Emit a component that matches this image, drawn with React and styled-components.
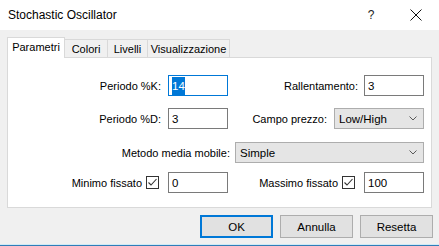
import styled, { createGlobalStyle } from "styled-components"

const GlobalStyle = createGlobalStyle`
    html, body {
        margin: 0;
        padding: 0;
        background: #ffffff;
    }
    body {
        font-family: "Liberation Sans", Arial, sans-serif;
        font-size: 11px;
        color: #000;
    }
`

const Chevron = () => (
    <svg width="8" height="5" viewBox="0 0 8 5">
        <polyline points="0.5,0.5 4,4 7.5,0.5" fill="none" stroke="#5a5a5a" strokeWidth="1" />
    </svg>
)

const Check = () => (
    <svg width="11" height="11" viewBox="0 0 11 11">
        <polyline points="1.5,5.5 4,8 9.5,2" fill="none" stroke="#333" strokeWidth="1.1" />
    </svg>
)

const App = () => {
    return (
        <>
            <GlobalStyle />
            <StWindow>
                <StTitleBar>
                    <StTitle>Stochastic Oscillator</StTitle>
                    <StHelp>?</StHelp>
                    <StClose>
                        <svg width="12" height="12" viewBox="0 0 12 12">
                            <path d="M0.5 0.5 L11.5 11.5 M11.5 0.5 L0.5 11.5" stroke="#111" strokeWidth="1" />
                        </svg>
                    </StClose>
                </StTitleBar>
                <StBody>
                    <StTabStrip>
                        <StTab $active $w={58}>Parametri</StTab>
                        <StTab $w={43}>Colori</StTab>
                        <StTab $w={41}>Livelli</StTab>
                        <StTab $w={83}>Visualizzazione</StTab>
                    </StTabStrip>
                    <StPanel>
                        <StRow $mt={0}>
                            <StField $gap={7}>
                                <StLabel>Periodo %K:</StLabel>
                                <StInput $w={60} $focused>
                                    <StSelected>14</StSelected>
                                </StInput>
                            </StField>
                            <StField $gap={6}>
                                <StLabel>Rallentamento:</StLabel>
                                <StInput $w={60}>3</StInput>
                            </StField>
                        </StRow>
                        <StRow $mt={12}>
                            <StField $gap={7}>
                                <StLabel>Periodo %D:</StLabel>
                                <StInput $w={60}>3</StInput>
                            </StField>
                            <StField $gap={7}>
                                <StLabel>Campo prezzo:</StLabel>
                                <StSelect $w={90}>
                                    <span>Low/High</span>
                                    <Chevron />
                                </StSelect>
                            </StField>
                        </StRow>
                        <StRow $mt={13}>
                            <StField $gap={5} $span>
                                <StLabel>Metodo media mobile:</StLabel>
                                <StSelect $w={189}>
                                    <span>Simple</span>
                                    <Chevron />
                                </StSelect>
                            </StField>
                        </StRow>
                        <StRow $mt={9}>
                            <StField $gap={4}>
                                <StLabel>Minimo fissato</StLabel>
                                <StCheckbox><Check /></StCheckbox>
                                <StInput $w={60} $ml={5}>0</StInput>
                            </StField>
                            <StField $gap={4}>
                                <StLabel>Massimo fissato</StLabel>
                                <StCheckbox><Check /></StCheckbox>
                                <StInput $w={60} $ml={5}>100</StInput>
                            </StField>
                        </StRow>
                    </StPanel>
                    <StButtonRow>
                        <StButton $default>OK</StButton>
                        <StButton>Annulla</StButton>
                        <StButton>Resetta</StButton>
                    </StButtonRow>
                </StBody>
            </StWindow>
        </>
    )
}

export default App

const StWindow = styled.div`
    width: 439px;
    height: 246px;
    background: #f0f0f0;
    display: flex;
    flex-direction: column;
    box-sizing: border-box;
    box-shadow: inset 0 -1px 0 #2f7db8, inset 0 -2px 0 #cfeaf6;
    overflow: hidden;
`
const StTitleBar = styled.div`
    height: 30px;
    background: #ffffff;
    display: flex;
    align-items: center;
    padding: 0 0 0 8px;
    flex-shrink: 0;
`
const StTitle = styled.div`
    flex: 1;
    font-size: 12px;
    color: #000;
    margin-top: -1px;
`
const StHelp = styled.div`
    width: 12px;
    font-size: 12px;
    color: #222;
    text-align: center;
    margin-right: 33px;
    margin-top: -1px;
`
const StClose = styled.div`
    width: 12px;
    height: 12px;
    display: flex;
    margin-right: 17px;
    margin-top: -1px;
`
const StBody = styled.div`
    padding: 7px 7px 0 7px;
    display: flex;
    flex-direction: column;
`
const StTabStrip = styled.div`
    display: flex;
    align-items: flex-end;
    height: 20px;
`
const StTab = styled.div`
    width: ${p => p.$w}px;
    height: ${p => p.$active ? 21 : 18}px;
    margin-bottom: ${p => p.$active ? -1 : 0}px;
    margin-left: ${p => p.$active ? 0 : -1}px;
    box-sizing: border-box;
    border: 1px solid #d9d9d9;
    border-bottom: none;
    background: ${p => p.$active ? "#ffffff" : "#f0f0f0"};
    position: relative;
    z-index: ${p => p.$active ? 2 : 1};
    display: flex;
    align-items: center;
    justify-content: center;
    padding-bottom: ${p => p.$active ? 2 : 0}px;
    white-space: nowrap;
    &:nth-child(2) {
        margin-left: 0;
        border-left: none;
    }
`
const StPanel = styled.div`
    height: 151px;
    box-sizing: border-box;
    border: 1px solid #d9d9d9;
    background: #ffffff;
    padding: 17px 7px 0 0;
    display: flex;
    flex-direction: column;
`
const StRow = styled.div`
    display: grid;
    grid-template-columns: 220px 1fr;
    height: 21px;
    margin-top: ${p => p.$mt}px;
`
const StField = styled.div`
    display: flex;
    justify-content: flex-end;
    align-items: center;
    gap: ${p => p.$gap}px;
    grid-column: ${p => p.$span ? "1 / 3" : "auto"};
`
const StLabel = styled.span`
    white-space: nowrap;
    color: #000;
`
const StInput = styled.div`
    width: ${p => p.$w}px;
    height: 21px;
    box-sizing: border-box;
    border: 1px solid ${p => p.$focused ? "#0078d7" : "#7a7a7a"};
    background: #ffffff;
    padding: 0 3px;
    margin-left: ${p => p.$ml || 0}px;
    display: flex;
    align-items: center;
    font-size: 11.5px;
`
const StSelected = styled.span`
    background: #0078d7;
    color: #ffffff;
    padding: 2px 0;
    line-height: 14px;
`
const StSelect = styled.div`
    width: ${p => p.$w}px;
    height: 21px;
    box-sizing: border-box;
    border: 1px solid #adadad;
    background: #e5e5e5;
    display: flex;
    align-items: center;
    justify-content: space-between;
    padding: 0 6px 0 4px;
    font-size: 11.5px;
`
const StCheckbox = styled.div`
    width: 13px;
    height: 13px;
    box-sizing: border-box;
    border: 1px solid #333333;
    background: #ffffff;
    display: flex;
    align-items: center;
    justify-content: center;
`
const StButtonRow = styled.div`
    display: flex;
    justify-content: flex-end;
    gap: 7px;
    margin-top: 7px;
    margin-right: -1px;
`
const StButton = styled.div`
    width: 73px;
    height: 23px;
    box-sizing: border-box;
    border: ${p => p.$default ? "2px solid #0078d7" : "1px solid #adadad"};
    background: #e1e1e1;
    display: flex;
    align-items: center;
    justify-content: center;
    font-size: 11.5px;
`
